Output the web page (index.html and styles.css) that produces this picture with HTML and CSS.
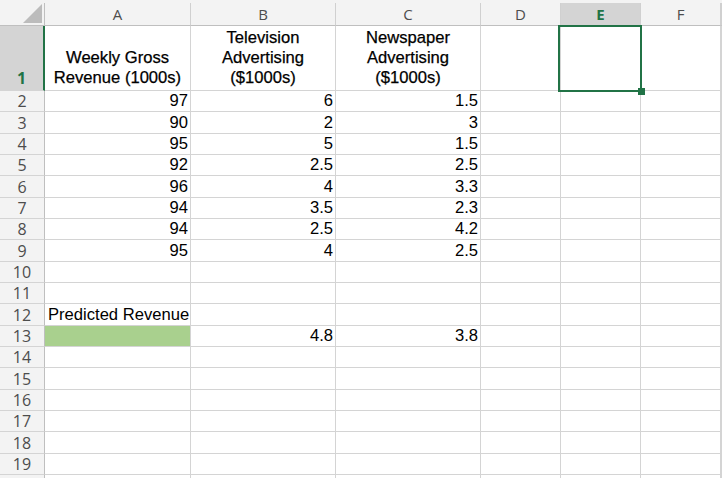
FILE: index.html
```html
<!DOCTYPE html>
<html>
<head>
<meta charset="utf-8">
<link rel="stylesheet" href="styles.css">
</head>
<body>
<div class="sheet">
  <div class="topstrip"></div>
  <div class="row hdr">
    <div class="rh corner"><svg width="44" height="22" viewBox="0 0 44 22"><polygon points="23,20 42,20 42,1" fill="#bcbcbc"/></svg></div>
    <div class="ch ca">A</div>
    <div class="ch cb">B</div>
    <div class="ch cc">C</div>
    <div class="ch cd">D</div>
    <div class="ch ce sel">E</div>
    <div class="ch cf">F</div>
    <div class="ch cg"></div>
  </div>
  <div class="row r1">
    <div class="rh sel">1</div>
    <div class="c ca ctr">Weekly Gross<br>Revenue (1000s)</div>
    <div class="c cb ctr">Television<br>Advertising<br>($1000s)</div>
    <div class="c cc ctr">Newspaper<br>Advertising<br>($1000s)</div>
    <div class="c cd"></div>
    <div class="c ce"></div>
    <div class="c cf"></div>
    <div class="c cg"></div>
  </div>
  <div class="row"><div class="rh">2</div><div class="c ca num">97</div><div class="c cb num">6</div><div class="c cc num">1.5</div><div class="c cd"></div><div class="c ce"></div><div class="c cf"></div><div class="c cg"></div></div>
  <div class="row"><div class="rh">3</div><div class="c ca num">90</div><div class="c cb num">2</div><div class="c cc num">3</div><div class="c cd"></div><div class="c ce"></div><div class="c cf"></div><div class="c cg"></div></div>
  <div class="row"><div class="rh">4</div><div class="c ca num">95</div><div class="c cb num">5</div><div class="c cc num">1.5</div><div class="c cd"></div><div class="c ce"></div><div class="c cf"></div><div class="c cg"></div></div>
  <div class="row"><div class="rh">5</div><div class="c ca num">92</div><div class="c cb num">2.5</div><div class="c cc num">2.5</div><div class="c cd"></div><div class="c ce"></div><div class="c cf"></div><div class="c cg"></div></div>
  <div class="row"><div class="rh">6</div><div class="c ca num">96</div><div class="c cb num">4</div><div class="c cc num">3.3</div><div class="c cd"></div><div class="c ce"></div><div class="c cf"></div><div class="c cg"></div></div>
  <div class="row"><div class="rh">7</div><div class="c ca num">94</div><div class="c cb num">3.5</div><div class="c cc num">2.3</div><div class="c cd"></div><div class="c ce"></div><div class="c cf"></div><div class="c cg"></div></div>
  <div class="row"><div class="rh">8</div><div class="c ca num">94</div><div class="c cb num">2.5</div><div class="c cc num">4.2</div><div class="c cd"></div><div class="c ce"></div><div class="c cf"></div><div class="c cg"></div></div>
  <div class="row"><div class="rh">9</div><div class="c ca num">95</div><div class="c cb num">4</div><div class="c cc num">2.5</div><div class="c cd"></div><div class="c ce"></div><div class="c cf"></div><div class="c cg"></div></div>
  <div class="row"><div class="rh">10</div><div class="c ca"></div><div class="c cb"></div><div class="c cc"></div><div class="c cd"></div><div class="c ce"></div><div class="c cf"></div><div class="c cg"></div></div>
  <div class="row"><div class="rh">11</div><div class="c ca"></div><div class="c cb"></div><div class="c cc"></div><div class="c cd"></div><div class="c ce"></div><div class="c cf"></div><div class="c cg"></div></div>
  <div class="row"><div class="rh">12</div><div class="c ca txt">Predicted Revenue</div><div class="c cb"></div><div class="c cc"></div><div class="c cd"></div><div class="c ce"></div><div class="c cf"></div><div class="c cg"></div></div>
  <div class="row"><div class="rh">13</div><div class="c ca fill"></div><div class="c cb num">4.8</div><div class="c cc num">3.8</div><div class="c cd"></div><div class="c ce"></div><div class="c cf"></div><div class="c cg"></div></div>
  <div class="row"><div class="rh">14</div><div class="c ca"></div><div class="c cb"></div><div class="c cc"></div><div class="c cd"></div><div class="c ce"></div><div class="c cf"></div><div class="c cg"></div></div>
  <div class="row"><div class="rh">15</div><div class="c ca"></div><div class="c cb"></div><div class="c cc"></div><div class="c cd"></div><div class="c ce"></div><div class="c cf"></div><div class="c cg"></div></div>
  <div class="row"><div class="rh">16</div><div class="c ca"></div><div class="c cb"></div><div class="c cc"></div><div class="c cd"></div><div class="c ce"></div><div class="c cf"></div><div class="c cg"></div></div>
  <div class="row"><div class="rh">17</div><div class="c ca"></div><div class="c cb"></div><div class="c cc"></div><div class="c cd"></div><div class="c ce"></div><div class="c cf"></div><div class="c cg"></div></div>
  <div class="row"><div class="rh">18</div><div class="c ca"></div><div class="c cb"></div><div class="c cc"></div><div class="c cd"></div><div class="c ce"></div><div class="c cf"></div><div class="c cg"></div></div>
  <div class="row"><div class="rh">19</div><div class="c ca"></div><div class="c cb"></div><div class="c cc"></div><div class="c cd"></div><div class="c ce"></div><div class="c cf"></div><div class="c cg"></div></div>
  <div class="row"><div class="rh"></div><div class="c ca"></div><div class="c cb"></div><div class="c cc"></div><div class="c cd"></div><div class="c ce"></div><div class="c cf"></div><div class="c cg"></div></div>
  <div class="selbox"><div class="handle"></div></div>
</div>
</body>
</html>
```

FILE: styles.css
```css
* { box-sizing: border-box; }
html, body { margin: 0; padding: 0; background: #ffffff; overflow: hidden; }
.sheet { position: relative; width: 722px; height: 478px; overflow: hidden; }
.topstrip { height: 3px; background: #f3f3f3; }
.row { display: flex; height: 21.33px; }
.row.hdr { height: 23px; }
.row.r1 { height: 65px; }
.rh {
  flex: 0 0 45px; width: 45px;
  background: #f3f3f3;
  border-right: 1px solid #bfbfbf;
  border-bottom: 1px solid #d4d4d4;
  font-family: "Open Sans", "Noto Sans", sans-serif;
  font-size: 16px; line-height: 20px; color: #4d4d4d;
  display: flex; align-items: flex-end; justify-content: center;
}
.rh.corner { border-bottom: 1px solid #bfbfbf; display: block; }
.rh.corner svg { display: block; }
.rh.sel { background: #d4d4d4; color: #217346; font-weight: 700; border-right: 2px solid #217346; padding-bottom: 2px; }
.ch {
  background: #f3f3f3;
  border-right: 1px solid #d0d0d0;
  border-bottom: 1px solid #bfbfbf;
  font-family: "Open Sans", "Noto Sans", sans-serif;
  font-size: 15px; color: #4d4d4d;
  display: flex; align-items: center; justify-content: center;
}
.ch.sel { background: #d4d4d4; color: #217346; font-weight: 700; }
.c {
  border-right: 1px solid #d4d4d4;
  border-bottom: 1px solid #d4d4d4;
  font-family: "Liberation Sans", Arial, sans-serif;
  font-size: 16.6px; line-height: 20px; color: #000000;
  display: flex; align-items: flex-end;
  white-space: nowrap;
}
.ca { flex: 0 0 146px; }
.cb { flex: 0 0 145px; }
.cc { flex: 0 0 145px; }
.cd { flex: 0 0 80px; }
.ce { flex: 0 0 80px; }
.cf { flex: 0 0 80px; }
.cg { flex: 1 1 auto; }
.ctr { justify-content: center; text-align: center; padding-bottom: 2px; -webkit-text-stroke: 0.25px #000; }
.num { justify-content: flex-end; padding-right: 2px; }
.txt { justify-content: flex-start; padding-left: 3px; }
.fill { background: #a9d08e; }
.selbox {
  position: absolute; left: 558px; top: 25px; width: 84px; height: 67px;
  border: 2px solid #217346;
}
.handle {
  position: absolute; right: -5px; bottom: -5px; width: 7px; height: 7px;
  background: #217346;
}
```
